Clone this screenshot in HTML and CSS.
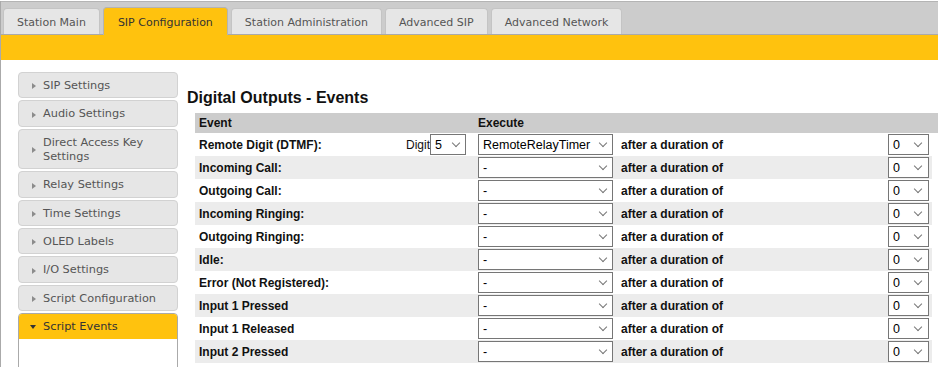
FILE: index.html
```html
<!DOCTYPE html>
<html lang="en">
<head>
  <meta charset="UTF-8">
  <title>SIP Configuration - Script Events</title>
  <link rel="stylesheet" href="styles.css">
</head>
<body>
  <div class="page">
    <nav class="tabbar">
      <a class="tab" href="#">Station Main</a>
      <a class="tab active" href="#">SIP Configuration</a>
      <a class="tab" href="#">Station Administration</a>
      <a class="tab" href="#">Advanced SIP</a>
      <a class="tab" href="#">Advanced Network</a>
    </nav>
    <div class="band"></div>

    <div class="layout">
      <aside class="sidebar">
        <a class="side-item" href="#"><span class="arrow"></span><span>SIP Settings</span></a>
        <a class="side-item" href="#"><span class="arrow"></span><span>Audio Settings</span></a>
        <a class="side-item" href="#"><span class="arrow"></span><span>Direct Access Key Settings</span></a>
        <a class="side-item" href="#"><span class="arrow"></span><span>Relay Settings</span></a>
        <a class="side-item" href="#"><span class="arrow"></span><span>Time Settings</span></a>
        <a class="side-item" href="#"><span class="arrow"></span><span>OLED Labels</span></a>
        <a class="side-item" href="#"><span class="arrow"></span><span>I/O Settings</span></a>
        <a class="side-item" href="#"><span class="arrow"></span><span>Script Configuration</span></a>
        <div class="side-group">
          <a class="side-item active" href="#"><span class="arrow down"></span><span>Script Events</span></a>
          <div class="side-panel"></div>
        </div>
      </aside>

      <main class="content">
        <h2>Digital Outputs - Events</h2>
        <table class="events">
          <colgroup>
            <col class="c-event"><col class="c-exec"><col class="c-after"><col class="c-dur"><col class="c-pad">
          </colgroup>
          <thead>
            <tr><th>Event</th><th colspan="4">Execute</th></tr>
          </thead>
          <tbody>
            <tr>
              <td>
                <div class="digit-row">
                  <span>Remote Digit (DTMF):</span>
                  <span class="digit">Digit<span class="sel"><select class="s-digit"><option>5</option></select></span></span>
                </div>
              </td>
              <td><span class="sel"><select class="s-exec"><option>RemoteRelayTimer</option><option>-</option></select></span></td>
              <td>after a duration of</td>
              <td><span class="sel"><select class="s-dur"><option>0</option></select></span></td>
            </tr>
            <tr class="alt">
              <td>Incoming Call:</td>
              <td><span class="sel"><select class="s-exec"><option>-</option></select></span></td>
              <td>after a duration of</td>
              <td><span class="sel"><select class="s-dur"><option>0</option></select></span></td>
            </tr>
            <tr>
              <td>Outgoing Call:</td>
              <td><span class="sel"><select class="s-exec"><option>-</option></select></span></td>
              <td>after a duration of</td>
              <td><span class="sel"><select class="s-dur"><option>0</option></select></span></td>
            </tr>
            <tr class="alt">
              <td>Incoming Ringing:</td>
              <td><span class="sel"><select class="s-exec"><option>-</option></select></span></td>
              <td>after a duration of</td>
              <td><span class="sel"><select class="s-dur"><option>0</option></select></span></td>
            </tr>
            <tr>
              <td>Outgoing Ringing:</td>
              <td><span class="sel"><select class="s-exec"><option>-</option></select></span></td>
              <td>after a duration of</td>
              <td><span class="sel"><select class="s-dur"><option>0</option></select></span></td>
            </tr>
            <tr class="alt">
              <td>Idle:</td>
              <td><span class="sel"><select class="s-exec"><option>-</option></select></span></td>
              <td>after a duration of</td>
              <td><span class="sel"><select class="s-dur"><option>0</option></select></span></td>
            </tr>
            <tr>
              <td>Error (Not Registered):</td>
              <td><span class="sel"><select class="s-exec"><option>-</option></select></span></td>
              <td>after a duration of</td>
              <td><span class="sel"><select class="s-dur"><option>0</option></select></span></td>
            </tr>
            <tr class="alt">
              <td>Input 1 Pressed</td>
              <td><span class="sel"><select class="s-exec"><option>-</option></select></span></td>
              <td>after a duration of</td>
              <td><span class="sel"><select class="s-dur"><option>0</option></select></span></td>
            </tr>
            <tr>
              <td>Input 1 Released</td>
              <td><span class="sel"><select class="s-exec"><option>-</option></select></span></td>
              <td>after a duration of</td>
              <td><span class="sel"><select class="s-dur"><option>0</option></select></span></td>
            </tr>
            <tr class="alt">
              <td>Input 2 Pressed</td>
              <td><span class="sel"><select class="s-exec"><option>-</option></select></span></td>
              <td>after a duration of</td>
              <td><span class="sel"><select class="s-dur"><option>0</option></select></span></td>
            </tr>
          </tbody>
        </table>
      </main>
    </div>
  </div>
</body>
</html>
```

FILE: styles.css
```css
* {
  box-sizing: border-box;
}

html {
  overflow: hidden;
}

body {
  margin: 0;
  background: #fff;
  color: #333;
  font-family: "DejaVu Sans", Verdana, sans-serif;
}

.page {
  margin-top: 1px;
  border-left: 1px solid #aaa;
  min-height: 100vh;
}

/* top tabs */
.tabbar {
  display: flex;
  align-items: flex-end;
  gap: 3px;
  height: 34px;
  padding-left: 2px;
  background: #ccc;
  border-top: 1px solid #b4b4b4;
  border-bottom: 1px solid #aaa;
}

.tab {
  height: 26px;
  padding: 3px 13px 0;
  line-height: 22px;
  font-size: 11px;
  color: #555;
  white-space: nowrap;
  text-decoration: none;
  background: #e6e6e6;
  border: 1px solid #c4c4c4;
  border-bottom: 0;
  border-radius: 4px 4px 0 0;
}

.tab.active {
  height: 28px;
  margin-bottom: -1px;
  padding: 4px 14px 0;
  background: #ffc20e;
  border-color: #b4b4b4;
  color: #333;
}

.band {
  height: 25px;
  background: #ffc20e;
}

/* page body */
.layout {
  display: flex;
  align-items: flex-start;
  padding: 12px 0 0 17px;
}

.sidebar {
  flex: none;
  width: 160px;
  display: flex;
  flex-direction: column;
  gap: 2px;
  font-size: 11.3px;
}

.side-item {
  display: flex;
  align-items: center;
  padding: 6px 8px 4px 13px;
  line-height: 14.35px;
  color: #555;
  text-decoration: none;
  background: #e6e6e6;
  border: 1px solid #d2d2d2;
  border-radius: 4px;
}

.arrow {
  flex: none;
  width: 0;
  height: 0;
  margin-right: 7px;
  border-left: 4px solid #8c8c8c;
  border-top: 3.5px solid transparent;
  border-bottom: 3.5px solid transparent;
}

.side-group {
  border: 1px solid #aaa;
  border-radius: 4px 4px 0 0;
}

.side-item.active {
  padding: 6px 8px 5px 11px;
  background: #ffc20e;
  border: 0;
  border-radius: 3px 3px 0 0;
  color: #333;
}

.arrow.down {
  margin-right: 7px;
  border-top: 4px solid #333;
  border-left: 3px solid transparent;
  border-right: 3px solid transparent;
  border-bottom: 0;
}

.side-panel {
  height: 120px;
  background: #fff;
}

.content {
  flex: 1;
  margin-left: 9px;
  padding-top: 16px;
}

.content h2 {
  margin: 0 0 6px;
  font: bold 16px/19px "Liberation Sans", Arial, sans-serif;
  color: #111;
}

/* events table */
.events {
  width: 743px;
  margin-left: 8px;
  table-layout: fixed;
  border-collapse: collapse;
  font: bold 12px "Liberation Sans", Arial, sans-serif;
  color: #111;
}

.c-event { width: 279px; }
.c-exec { width: 143px; }
.c-after { width: 267px; }
.c-dur { width: 48px; }
.c-pad { width: 6px; }

.events th {
  height: 20px;
  padding: 0 4px;
  text-align: left;
  background: #ccc;
}

.events td {
  height: 23px;
  padding: 0 4px;
  white-space: nowrap;
}

.events tr.alt td {
  background: #ececec;
}

.digit-row {
  display: flex;
  align-items: center;
  justify-content: space-between;
  padding-right: 4px;
}

.digit {
  display: flex;
  align-items: center;
  font-weight: normal;
}

.sel {
  position: relative;
  display: block;
}

.sel select {
  display: block;
  height: 21px;
  margin: 0;
  padding: 0 0 0 4px;
  -webkit-appearance: none;
  appearance: none;
  background: #fff;
  border: 1px solid #767676;
  border-radius: 0;
  font: 12.5px "Liberation Sans", Arial, sans-serif;
  color: #000;
}

.sel::after {
  content: "";
  position: absolute;
  top: 5.5px;
  right: 7px;
  width: 5px;
  height: 5px;
  border-right: 1px solid #777;
  border-bottom: 1px solid #777;
  transform: rotate(45deg);
  pointer-events: none;
}

.s-digit { width: 36px; }
.s-exec { width: 135px; }
.s-dur { width: 41px; }
```
